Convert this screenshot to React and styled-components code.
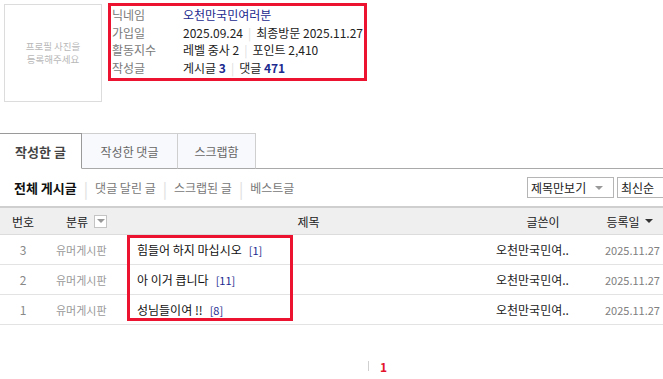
import React from 'react';
import styled, { createGlobalStyle } from 'styled-components';

const GlobalStyle = createGlobalStyle`
  html, body {
    margin: 0;
    padding: 0;
    background: #fff;
    overflow: hidden;
  }
  body {
    font-family: "Noto Sans CJK KR", "Noto Sans", sans-serif;
    color: #222;
  }
`;

const Page = styled.div`
  width: 663px;
  overflow: hidden;
`;

const ProfileSection = styled.div`
  display: flex;
  align-items: flex-start;
  padding: 3px 0 0 4px;
`;

const Photo = styled.div`
  width: 96px;
  height: 96px;
  margin-top: 1px;
  border: 1px solid #dcdcdc;
  display: flex;
  align-items: center;
  justify-content: center;
  text-align: center;
  font-size: 9.5px;
  line-height: 13px;
  color: #b8b8b8;
`;

const InfoBox = styled.div`
  width: 253px;
  margin-left: 6px;
  border: 3px solid #ec1330;
  padding: 0 0 1px;
`;

const InfoRow = styled.div`
  display: flex;
  height: 17.7px;
  line-height: 17.7px;
  font-size: 12px;
  white-space: nowrap;
`;

const Label = styled.span`
  width: 71px;
  color: #7a7a7a;
  margin-left: 1px;
`;

const Value = styled.span`
  color: #222;
`;

const Nick = styled.span`
  color: #1b2a8f;
`;

const Count = styled.b`
  color: #1b2a8f;
`;

const Sep = styled.span`
  color: #e0e0e0;
  margin: 0 ${(p) => p.$gap ?? 5}px;
`;

const TabBar = styled.div`
  display: flex;
  align-items: flex-end;
  height: 35px;
  margin-top: 31px;
  border-bottom: 1px solid #a9a9a9;
`;

const Tab = styled.div`
  box-sizing: border-box;
  width: ${(p) => p.$w}px;
  height: 36px;
  margin-bottom: -1px;
  display: flex;
  align-items: center;
  justify-content: center;
  border-top: 1px solid ${(p) => (p.$active ? '#9a9a9a' : '#cfcfcf')};
  border-right: 1px solid ${(p) => (p.$active ? '#9a9a9a' : '#cfcfcf')};
  border-bottom: 1px solid ${(p) => (p.$active ? '#fff' : '#a9a9a9')};
  background: ${(p) => (p.$active ? '#fff' : '#f8f9fc')};
  font-size: ${(p) => (p.$active ? 13 : 12)}px;
  font-weight: ${(p) => (p.$active ? 700 : 400)};
  color: ${(p) => (p.$active ? '#444' : '#666')};
`;

const FilterBar = styled.div`
  display: flex;
  align-items: center;
  height: 37px;
  padding-left: 14px;
`;

const FilterItem = styled.span`
  font-size: ${(p) => (p.$active ? 13 : 12)}px;
  font-weight: ${(p) => (p.$active ? 700 : 400)};
  color: ${(p) => (p.$active ? '#111' : '#777')};
  white-space: nowrap;
`;

const Selects = styled.div`
  display: flex;
  gap: 3px;
  margin-left: auto;
  margin-right: -12px;
`;

const Select = styled.div`
  box-sizing: border-box;
  width: ${(p) => p.$w}px;
  height: 21px;
  border: 1px solid #b5b5b5;
  display: flex;
  align-items: center;
  padding-left: 3px;
  font-size: 12px;
  color: #222;
  white-space: nowrap;
  background: #fff;
`;

const Caret = styled.span`
  width: 0;
  height: 0;
  margin-left: ${(p) => p.$ml ?? 8}px;
  border-left: 4px solid transparent;
  border-right: 4px solid transparent;
  border-top: 4px solid ${(p) => p.$color || '#999'};
`;

const TableWrap = styled.div`
  position: relative;
`;

const Grid = styled.div`
  display: grid;
  grid-template-columns: 46px 81px 363px 106px 67px;
  align-items: center;
`;

const HeadRow = styled(Grid)`
  height: 26px;
  border-top: 2px solid #cfcfcf;
  border-bottom: 1px solid #dcdcdc;
  background: #efefef;
  font-size: 12px;
  color: #222;
`;

const HeadCell = styled.div`
  display: flex;
  align-items: center;
  justify-content: center;
  gap: ${(p) => p.$gap ?? 6}px;
`;

const MiniSelect = styled.span`
  box-sizing: border-box;
  width: 13px;
  height: 13px;
  border: 1px solid #c4c4c4;
  background: #fff;
  display: flex;
  align-items: center;
  justify-content: center;
`;

const Row = styled(Grid)`
  height: 29px;
  border-bottom: 1px solid #e3e3e3;
  font-size: 12px;
`;

const Num = styled.div`
  text-align: center;
  color: #888;
`;

const Category = styled.div`
  padding-left: 10px;
  font-size: 11px;
  color: #999;
`;

const Title = styled.div`
  padding-left: 10px;
  color: #111;
  white-space: nowrap;
`;

const Comments = styled.span`
  margin-left: 7px;
  font-size: 11px;
  color: #1b2a8f;
`;

const Author = styled.div`
  padding-left: 6px;
  color: #222;
  white-space: nowrap;
`;

const DateCell = styled.div`
  padding-left: 9px;
  font-size: 11px;
  color: #808080;
`;

const Highlight = styled.div`
  position: absolute;
  left: 127px;
  top: 29px;
  width: 160px;
  height: 80px;
  border: 3px solid #ec1330;
  pointer-events: none;
`;

const Pagination = styled.div`
  display: flex;
  align-items: center;
  height: 20px;
  margin-top: 31px;
  padding-left: 368px;
  font-size: 12px;
`;

const PageSep = styled.span`
  width: 1px;
  height: 10px;
  background: #d0d0d0;
  margin-right: 11px;
`;

const Current = styled.b`
  color: #e4122b;
`;

const posts = [
  { no: 3, title: '힘들어 하지 마십시오', comments: 1 },
  { no: 2, title: '아 이거 큽니다', comments: 11 },
  { no: 1, title: '성님들이여 !!', comments: 8 },
];

const App = () => (
  <Page>
    <GlobalStyle />
    <ProfileSection>
      <Photo>
        프로필 사진을
        <br />
        등록해주세요
      </Photo>
      <InfoBox>
        <InfoRow>
          <Label>닉네임</Label>
          <Value><Nick>오천만국민여러분</Nick></Value>
        </InfoRow>
        <InfoRow>
          <Label>가입일</Label>
          <Value>2025.09.24<Sep>|</Sep>최종방문 2025.11.27</Value>
        </InfoRow>
        <InfoRow>
          <Label>활동지수</Label>
          <Value>레벨 중사 2<Sep>|</Sep>포인트 2,410</Value>
        </InfoRow>
        <InfoRow>
          <Label>작성글</Label>
          <Value>게시글 <Count>3</Count><Sep>|</Sep>댓글 <Count>471</Count></Value>
        </InfoRow>
      </InfoBox>
    </ProfileSection>

    <TabBar>
      <Tab $w={82} $active>작성한 글</Tab>
      <Tab $w={96}>작성한 댓글</Tab>
      <Tab $w={78}>스크랩함</Tab>
    </TabBar>

    <FilterBar>
      <FilterItem $active>전체 게시글</FilterItem>
      <Sep $gap={7}>|</Sep>
      <FilterItem>댓글 달린 글</FilterItem>
      <Sep $gap={7}>|</Sep>
      <FilterItem>스크랩된 글</FilterItem>
      <Sep $gap={7}>|</Sep>
      <FilterItem>베스트글</FilterItem>
      <Selects>
        <Select $w={87}>제목만보기<Caret $ml={9} /></Select>
        <Select $w={58}>최신순</Select>
      </Selects>
    </FilterBar>

    <TableWrap>
      <HeadRow>
        <HeadCell>번호</HeadCell>
        <HeadCell>
          분류
          <MiniSelect><Caret $ml={0} /></MiniSelect>
        </HeadCell>
        <HeadCell>제목</HeadCell>
        <HeadCell>글쓴이</HeadCell>
        <HeadCell $gap={5}>
          등록일
          <Caret $ml={0} $color="#333" />
        </HeadCell>
      </HeadRow>
      {posts.map((p) => (
        <Row key={p.no}>
          <Num>{p.no}</Num>
          <Category>유머게시판</Category>
          <Title>
            {p.title}
            <Comments>[{p.comments}]</Comments>
          </Title>
          <Author>오천만국민여..</Author>
          <DateCell>2025.11.27</DateCell>
        </Row>
      ))}
      <Highlight />
    </TableWrap>

    <Pagination>
      <PageSep />
      <Current>1</Current>
    </Pagination>
  </Page>
);

export default App;
